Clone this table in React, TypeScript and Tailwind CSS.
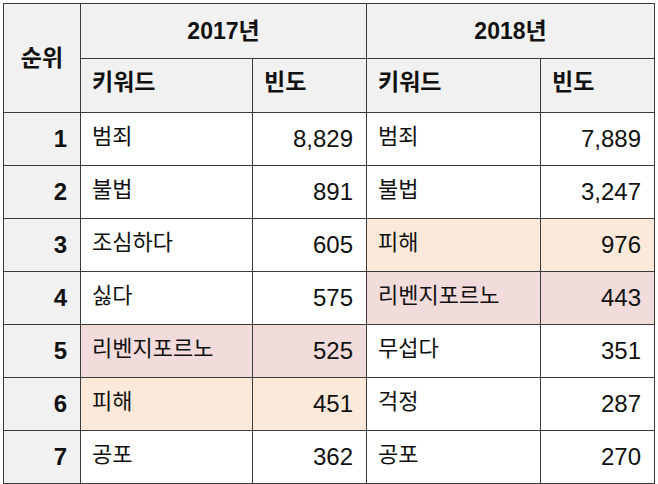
import React from "react"

type Row = {
  rank: number
  k17: string
  f17: string
  k18: string
  f18: string
  h17?: "pink" | "peach"
  h18?: "pink" | "peach"
}

const rows: Row[] = [
  { rank: 1, k17: "범죄", f17: "8,829", k18: "범죄", f18: "7,889" },
  { rank: 2, k17: "불법", f17: "891", k18: "불법", f18: "3,247" },
  { rank: 3, k17: "조심하다", f17: "605", k18: "피해", f18: "976", h18: "peach" },
  { rank: 4, k17: "싫다", f17: "575", k18: "리벤지포르노", f18: "443", h18: "pink" },
  { rank: 5, k17: "리벤지포르노", f17: "525", k18: "무섭다", f18: "351", h17: "pink" },
  { rank: 6, k17: "피해", f17: "451", k18: "걱정", f18: "287", h17: "peach" },
  { rank: 7, k17: "공포", f17: "362", k18: "공포", f18: "270" },
]

const bg = (h?: "pink" | "peach") =>
  h === "pink" ? "bg-[#f2dcdb]" : h === "peach" ? "bg-[#fde9d9]" : "bg-white"

export default function App() {
  return (
    <div className="w-[658px] h-[484px] bg-white pl-[3px] pt-[3px] font-['Liberation_Sans','Noto_Sans_CJK_KR',sans-serif] text-[#111]">
      <table className="table-fixed border-collapse w-[652px] text-[24px] leading-none">
        <colgroup>
          <col className="w-[77px]" />
          <col className="w-[172px]" />
          <col className="w-[114px]" />
          <col className="w-[174px]" />
          <col className="w-[114px]" />
        </colgroup>
        <thead className="text-[23px]">
          {/* Year headers */}
          <tr className="h-[55px]">
            <th rowSpan={2} className="border border-[#3a3a3a] bg-[#f1f1f1] font-bold text-center">
              순위
            </th>
            <th colSpan={2} className="border border-[#3a3a3a] bg-[#f1f1f1] font-bold text-center">
              2017년
            </th>
            <th colSpan={2} className="border border-[#3a3a3a] bg-[#f1f1f1] font-bold text-center">
              2018년
            </th>
          </tr>
          <tr className="h-[54px]">
            <th className="border border-[#3a3a3a] bg-[#f1f1f1] font-bold text-left pl-[11px] pb-[6px]">키워드</th>
            <th className="border border-[#3a3a3a] bg-[#f1f1f1] font-bold text-left pl-[11px] pb-[6px]">빈도</th>
            <th className="border border-[#3a3a3a] bg-[#f1f1f1] font-bold text-left pl-[11px] pb-[6px]">키워드</th>
            <th className="border border-[#3a3a3a] bg-[#f1f1f1] font-bold text-left pl-[11px] pb-[6px]">빈도</th>
          </tr>
        </thead>
        <tbody>
          {rows.map((r) => (
            <tr key={r.rank} className="h-[53px]">
              <td className="border border-[#3a3a3a] bg-[#f1f1f1] font-bold text-right pr-[13px]">{r.rank}</td>
              <td className={`border border-[#3a3a3a] ${bg(r.h17)} text-left text-[22px] pl-[11px] pb-[4px]`}>{r.k17}</td>
              <td className={`border border-[#3a3a3a] ${bg(r.h17)} text-right pr-[13px]`}>{r.f17}</td>
              <td className={`border border-[#3a3a3a] ${bg(r.h18)} text-left text-[22px] pl-[11px] pb-[4px]`}>{r.k18}</td>
              <td className={`border border-[#3a3a3a] ${bg(r.h18)} text-right pr-[13px]`}>{r.f18}</td>
            </tr>
          ))}
        </tbody>
      </table>
    </div>
  )
}
